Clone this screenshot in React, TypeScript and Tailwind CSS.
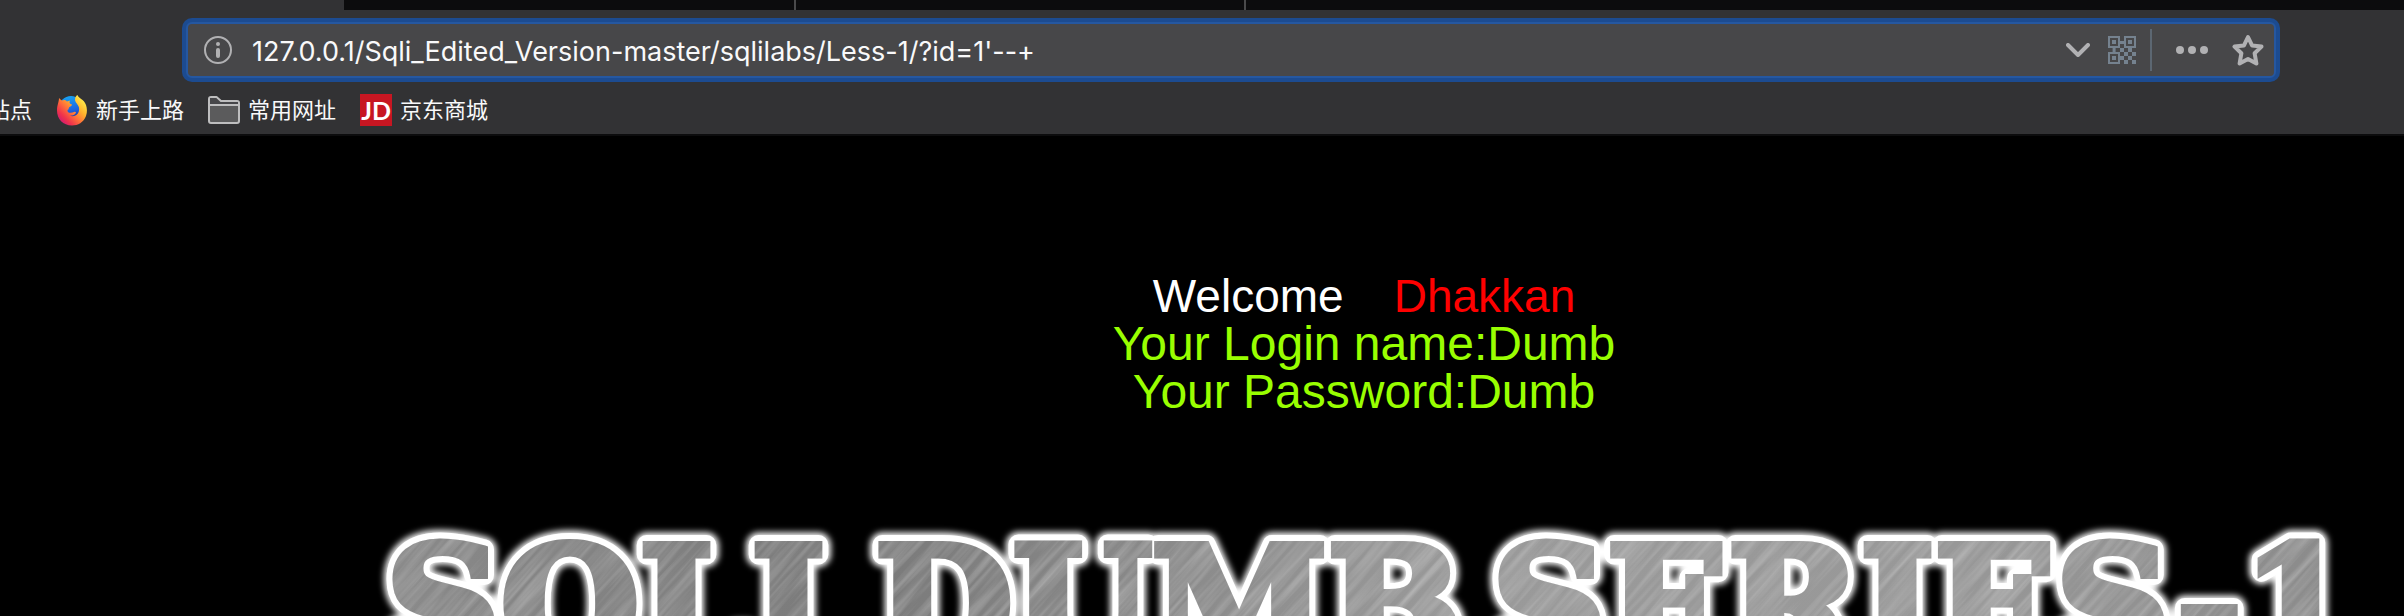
import type { ReactNode } from "react";

function InfoIcon() {
  return (
    <svg viewBox="0 0 28 28" className="h-7 w-7" fill="none" aria-hidden="true">
      <circle cx="14" cy="14" r="13" stroke="#b1b1b3" strokeWidth="2" />
      <circle cx="14" cy="8" r="2" fill="#b1b1b3" />
      <rect x="12" y="12" width="4" height="10" rx="2" fill="#b1b1b3" />
    </svg>
  );
}

function ChevronIcon() {
  return (
    <svg viewBox="0 0 24 14" className="h-[14px] w-6" fill="none" aria-hidden="true">
      <path d="M2 2 L12 12 L22 2" stroke="#b1b1b3" strokeWidth="4" strokeLinecap="round" strokeLinejoin="round" />
    </svg>
  );
}

function QrIcon() {
  return (
    <svg viewBox="0 0 14 14" className="h-7 w-7" fill="#75828f" aria-hidden="true">
      <path
        fillRule="evenodd"
        d="M0 0h6v6H0zM1 1v4h4V1zM8 0h6v6H8zM9 1v4h4V1zM0 8h6v6H0zM1 9v4h4V9z"
      />
      <path d="M2 2h2v2H2zM10 2h2v2h-2zM2 10h2v2H2zM6 2.500h2v1.500H6zM2.300 6h1.500v2H2.300zM6 6h2v2H6zM10 6h2v2h-2zM8 8h2v2H8zM12 8h2v2h-2zM6 10h2v2H6zM10 10h2v2h-2zM8 12h2v2H8zM12 12h2v2h-2z" />
    </svg>
  );
}

function DotsIcon() {
  return (
    <svg viewBox="0 0 32 8" className="h-2 w-8" fill="#b1b1b3" aria-hidden="true">
      <circle cx="4" cy="4" r="4" />
      <circle cx="16" cy="4" r="4" />
      <circle cx="28" cy="4" r="4" />
    </svg>
  );
}

function StarIcon() {
  return (
    <svg viewBox="0 0 32 32" className="h-8 w-8" fill="none" aria-hidden="true">
      <path
        d="M16 3 L20 11.400 L29.500 12.600 L22.600 19.200 L24.400 29.500 L16 25 L7.600 29.500 L9.400 19.200 L2.500 12.600 L12 11.400 Z"
        stroke="#b1b1b3"
        strokeWidth="4"
        strokeLinejoin="round"
      />
    </svg>
  );
}

function FirefoxIcon() {
  return (
    <svg viewBox="0 0 32 32" className="h-8 w-8" aria-hidden="true">
      <defs>
        <linearGradient id="fox" x1="0.9" y1="0.1" x2="0.15" y2="0.85">
          <stop offset="0" stopColor="#fff44f" />
          <stop offset="0.35" stopColor="#ffb32c" />
          <stop offset="0.6" stopColor="#ff7139" />
          <stop offset="0.85" stopColor="#f0334b" />
          <stop offset="1" stopColor="#d8206a" />
        </linearGradient>
        <linearGradient id="globe" x1="0.4" y1="0" x2="0.6" y2="1">
          <stop offset="0" stopColor="#18a4f4" />
          <stop offset="0.6" stopColor="#1a62e0" />
          <stop offset="1" stopColor="#232a8c" />
        </linearGradient>
      </defs>
      <circle cx="15" cy="14" r="12" fill="url(#globe)" />
      <path
        fill="url(#fox)"
        d="M3 4 C4 5 5 6 6 6.500 C8 5.500 10 6 11 7.500 L14 6.500 C13 8.500 13.500 10 16 10.500 C16 12 14 12.500 13 13.500 C12.500 14.500 13 15.500 11.500 16 C11 19 15 19.500 18 18 C20 17.500 20.500 18.500 19.500 19.500 C18 21.500 15 22 13 21.500 C19 24 24 20 23 13.500 C22 10 19 8.500 19 5.500 C19 3 20.500 1.500 21.500 1 C22 4 28 5 30 11 C31 14 31.500 18 30 22 C27.500 28.500 22 31.500 16 31.500 C7 31.500 1 25 1 16.500 C1 11 3 8 3 4 Z"
      />
    </svg>
  );
}

function FolderIcon() {
  return (
    <svg viewBox="0 0 32 28" className="h-7 w-8" aria-hidden="true">
      <path
        d="M1 3 a2 2 0 0 1 2 -2 H8.500 L13 5 H29 a2 2 0 0 1 2 2 V25 a2 2 0 0 1 -2 2 H3 a2 2 0 0 1 -2 -2 Z"
        fill="#5b5b5c"
        stroke="#bebebf"
        strokeWidth="2"
        strokeLinejoin="round"
      />
      <path d="M2 2 H8 L12 6 H30 V8 H2 Z" fill="#47474a" />
      <path d="M1 9 H31" stroke="#bebebf" strokeWidth="2" />
    </svg>
  );
}

function JdIcon() {
  return (
    <span className="flex h-8 w-8 items-center justify-center bg-[#c71622] font-['Lato',sans-serif] text-[25px] leading-8 font-bold text-white">
      JD
    </span>
  );
}

function Bookmark({ icon, children }: { icon?: ReactNode; children: ReactNode }) {
  return (
    <a href="#" className="flex items-center gap-2 whitespace-nowrap">
      {icon}
      <span>{children}</span>
    </a>
  );
}

function Banner() {
  return (
    <svg viewBox="0 0 1980 160" className="h-40 w-[1980px] shrink-0 overflow-visible" role="img" aria-label="SQLI DUMB SERIES-1">
      <defs>
        <g id="title" fontFamily="'DejaVu Serif', serif" fontWeight="700" fontSize="159">
          <text x="12" y="147">SQLI</text>
          <text x="501" y="147">DUMB</text>
          <text x="1118" y="147">SERIES-1</text>
        </g>
        <linearGradient id="steel" x1="0" y1="0" x2="1" y2="0">
          <stop offset="0" stopColor="#8a8a8a" />
          <stop offset="0.25" stopColor="#7a7a7a" />
          <stop offset="0.55" stopColor="#9a9a9a" />
          <stop offset="0.8" stopColor="#989898" />
          <stop offset="1" stopColor="#8a8a8a" />
        </linearGradient>
        <filter id="glow" x="-5%" y="-30%" width="110%" height="160%">
          <feGaussianBlur stdDeviation="3" />
        </filter>
        <filter id="brushed" x="0" y="0" width="100%" height="100%">
          <feTurbulence type="fractalNoise" baseFrequency="0.008 0.16" numOctaves="3" seed="4" />
          <feColorMatrix values="0 0 0 0 1  0 0 0 0 1  0 0 0 0 1  0.500 0 0 0 -0.180" />
        </filter>
        <mask id="letters" maskUnits="userSpaceOnUse" x="0" y="0" width="1980" height="200">
          <use href="#title" fill="#fff" stroke="#fff" strokeWidth="8" />
        </mask>
      </defs>
      <use href="#title" fill="#fff" stroke="#fff" strokeWidth="25" strokeLinejoin="round" filter="url(#glow)" />
      <use href="#title" fill="#fff" stroke="#fff" strokeWidth="20" strokeLinejoin="round" />
      <g mask="url(#letters)">
        <rect width="1980" height="200" fill="url(#steel)" />
        <g transform="rotate(-48 990 80)">
          <rect x="0" y="-800" width="1980" height="1760" filter="url(#brushed)" />
        </g>
      </g>
    </svg>
  );
}

export default function App() {
  return (
    <div className="flex h-screen flex-col overflow-hidden bg-black font-['Inter','Noto_Sans_CJK_SC',sans-serif]">
      <header className="shrink-0 border-b-2 border-[#0c0c0d] bg-[#323234]">
        <div className="flex h-[10px] pl-[344px]">
          <div className="w-[452px] border-r-2 border-[#4a4a4b] bg-[#0c0c0d]" />
          <div className="w-[450px] border-r-2 border-[#4a4a4b] bg-[#0c0c0d]" />
          <div className="flex-1 bg-[#0c0c0d]" />
        </div>
        <div className="pt-2 pr-[124px] pl-[182px]">
          <div className="rounded-[10px] bg-[#1c4b90] p-1">
            <div className="flex h-14 items-center rounded-md border-2 border-[#2557a0] bg-[#474749] pr-[10px] pl-4">
              <button type="button" aria-label="Site information">
                <InfoIcon />
              </button>
              <input
                type="text"
                aria-label="Address"
                defaultValue="127.0.0.1/Sqli_Edited_Version-master/sqlilabs/Less-1/?id=1'--+"
                className="ml-5 min-w-0 flex-1 bg-transparent pt-1 text-[27px] leading-10 text-[#f9f9fa] outline-none"
              />
              <button type="button" aria-label="Show history">
                <ChevronIcon />
              </button>
              <button type="button" aria-label="QR code" className="ml-[18px]">
                <QrIcon />
              </button>
              <span className="ml-[14px] h-[42px] w-0.5 bg-[#5c6772]" />
              <button type="button" aria-label="Page actions" className="ml-6">
                <DotsIcon />
              </button>
              <button type="button" aria-label="Bookmark this page" className="ml-6">
                <StarIcon />
              </button>
            </div>
          </div>
        </div>
        <nav className="-ml-3 flex h-[52px] items-center gap-6 pt-1 text-[22px] leading-8 text-[#f9f9fa]">
          <Bookmark>站点</Bookmark>
          <Bookmark icon={<FirefoxIcon />}>新手上路</Bookmark>
          <Bookmark icon={<FolderIcon />}>常用网址</Bookmark>
          <Bookmark icon={<JdIcon />}>京东商城</Bookmark>
        </nav>
      </header>

      <main className="flex min-h-0 flex-1 flex-col items-center overflow-hidden pt-[136px] pl-[324px] font-['Liberation_Sans',sans-serif]">
        <h1 className="flex gap-[50px] text-[46px] leading-[48px] text-white">
          <span>Welcome</span>
          <span className="text-[#ff0000]">Dhakkan</span>
        </h1>
        <p className="text-center text-[48px] leading-[48px] text-[#99ff00]">
          Your Login name:Dumb
          <br />
          Your Password:Dumb
        </p>
        <div className="mt-[98px]">
          <Banner />
        </div>
      </main>
    </div>
  );
}
